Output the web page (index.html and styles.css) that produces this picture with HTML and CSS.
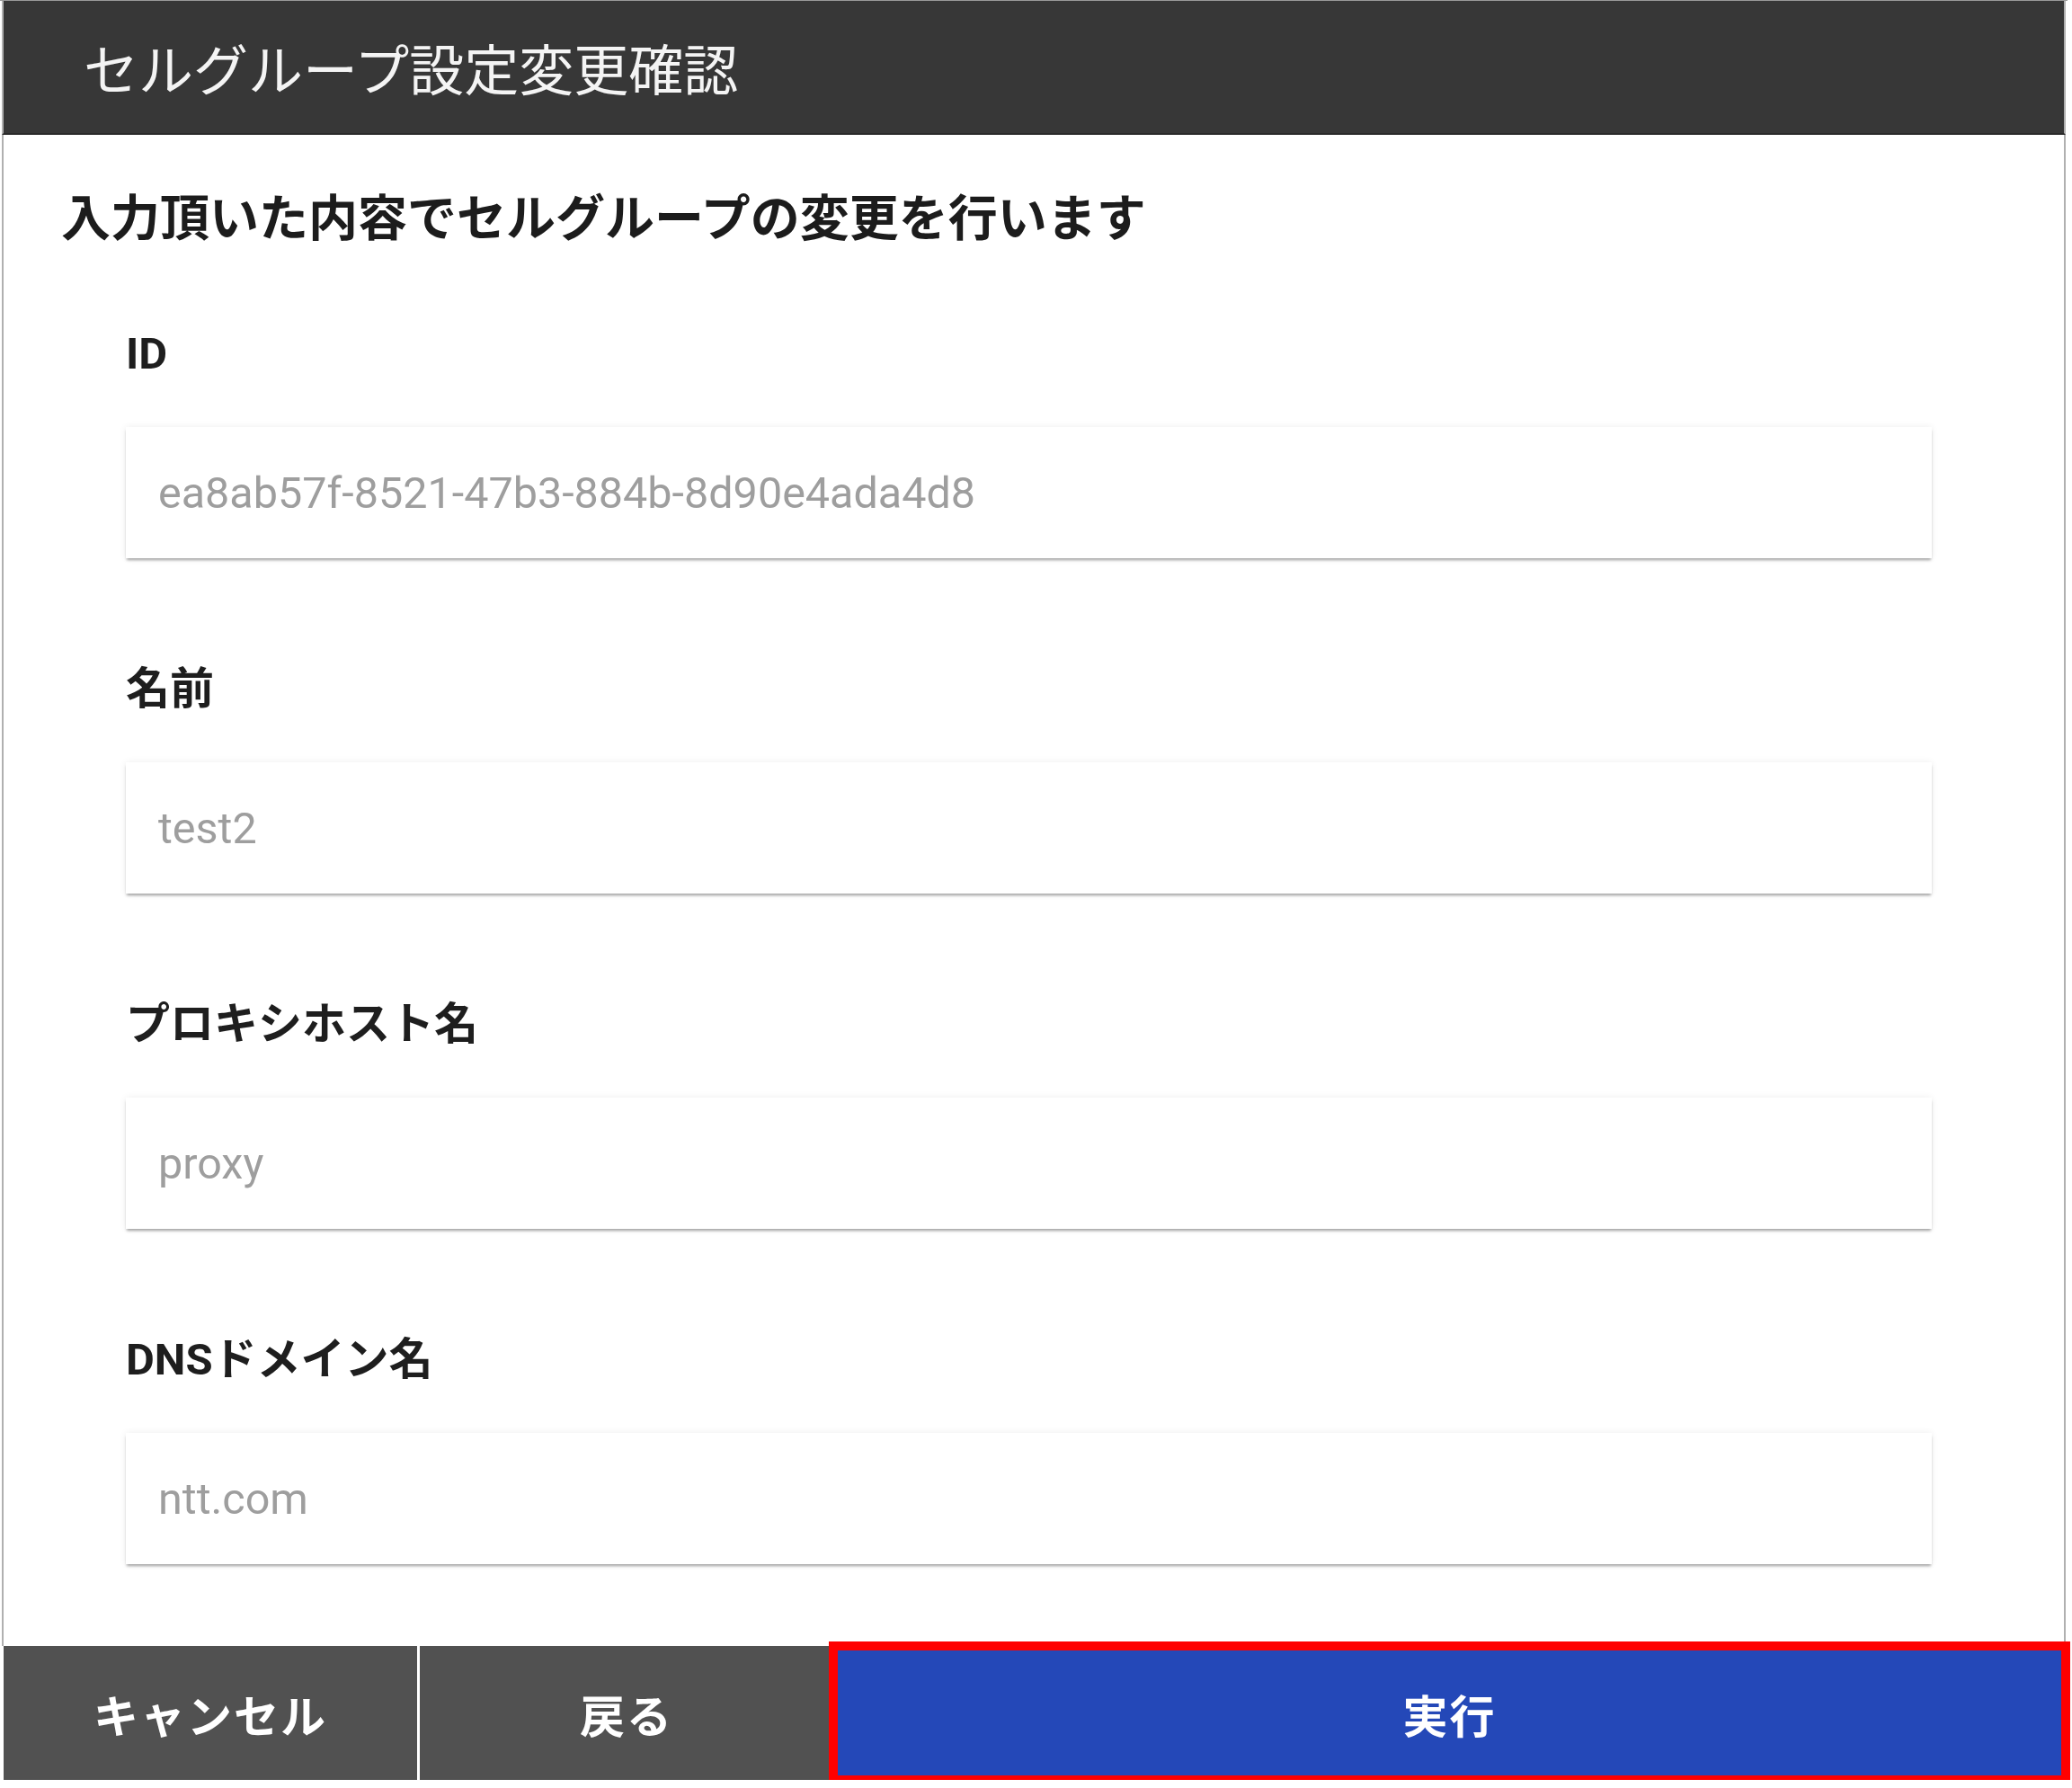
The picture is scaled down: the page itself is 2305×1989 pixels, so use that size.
FILE: index.html
```html
<!DOCTYPE html>
<html lang="ja">
<head>
    <meta charset="UTF-8">
    <meta name="viewport" content="width=device-width, initial-scale=1.0">
    <title>セルグループ設定変更確認</title>
    <link rel="stylesheet" href="styles.css">
</head>
<body>
    <div class="dialog">
        <div class="dialog-header">セルグループ設定変更確認</div>

        <div class="dialog-body">
            <p class="lead">入力頂いた内容でセルグループの変更を行います</p>

            <div class="field">
                <div class="field-label">ID</div>
                <div class="field-value">ea8ab57f-8521-47b3-884b-8d90e4ada4d8</div>
            </div>

            <div class="field">
                <div class="field-label">名前</div>
                <div class="field-value">test2</div>
            </div>

            <div class="field">
                <div class="field-label">プロキシホスト名</div>
                <div class="field-value">proxy</div>
            </div>

            <div class="field">
                <div class="field-label">DNSドメイン名</div>
                <div class="field-value">ntt.com</div>
            </div>
        </div>

        <div class="dialog-actions">
            <button class="btn btn-cancel">キャンセル</button>
            <button class="btn btn-back">戻る</button>
            <button class="btn btn-exec">実行</button>
        </div>
    </div>
</body>
</html>
```

FILE: styles.css
```css
* {
    margin: 0;
    padding: 0;
    box-sizing: border-box;
}

body {
    background: #fff;
    font-family: Roboto, "Noto Sans CJK JP", sans-serif;
    color: #1e1e1e;
}

.dialog {
    width: 2300px;
    padding-left: 2px;
    border-top: 1px solid #9a9a9a;
}

.dialog-header {
    width: 2296px;
    height: 149px;
    background: #373737;
    border-bottom: 2px solid #2a2a2a;
    border-left: 2px solid #b0b0b0;
    border-right: 2px solid #b0b0b0;
    color: #f4f4f4;
    font-family: "Noto Sans CJK JP", sans-serif;
    font-size: 61px;
    font-weight: 400;
    display: flex;
    align-items: center;
    padding-left: 89px;
}

.dialog-body {
    width: 2296px;
    border-left: 2px solid #b0b0b0;
    border-right: 2px solid #b0b0b0;
    padding: 48px 147px 91px 64px;
}

.lead {
    font-family: "Noto Sans CJK JP", sans-serif;
    font-size: 55px;
    font-weight: 700;
    line-height: 80px;
    color: #1c1c1c;
    margin-bottom: 86px;
}

.field {
    padding-left: 72px;
    margin-bottom: 116px;
}

.field:last-child {
    margin-bottom: 0;
}

.field-label {
    font-family: Roboto, "Noto Sans CJK JP", sans-serif;
    font-size: 49px;
    font-weight: 700;
    line-height: 60px;
    color: #1e1e1e;
    margin-bottom: 51px;
}

.field-value {
    height: 146px;
    background: #fff;
    display: flex;
    align-items: center;
    padding-left: 36px;
    font-family: Roboto, sans-serif;
    font-size: 48.5px;
    color: #9e9e9e;
    box-shadow: 0 3px 3px -1px rgba(0, 0, 0, 0.35), 0 0 8px rgba(0, 0, 0, 0.07);
}

.dialog-actions {
    display: flex;
    width: 2296px;
    height: 149px;
    padding-left: 2px;
}

.btn {
    border: none;
    color: #fff;
    font-family: "Noto Sans CJK JP", sans-serif;
    font-size: 50px;
    font-weight: 700;
    letter-spacing: 2px;
    cursor: pointer;
}

.btn-cancel,
.btn-back {
    width: 460px;
    background: #515151;
}

.btn-cancel {
    margin-right: 3px;
}

.btn-exec {
    flex: 1;
    background: #2448b8;
    outline: 10px solid #ff0000;
    outline-offset: -5px;
}
```
